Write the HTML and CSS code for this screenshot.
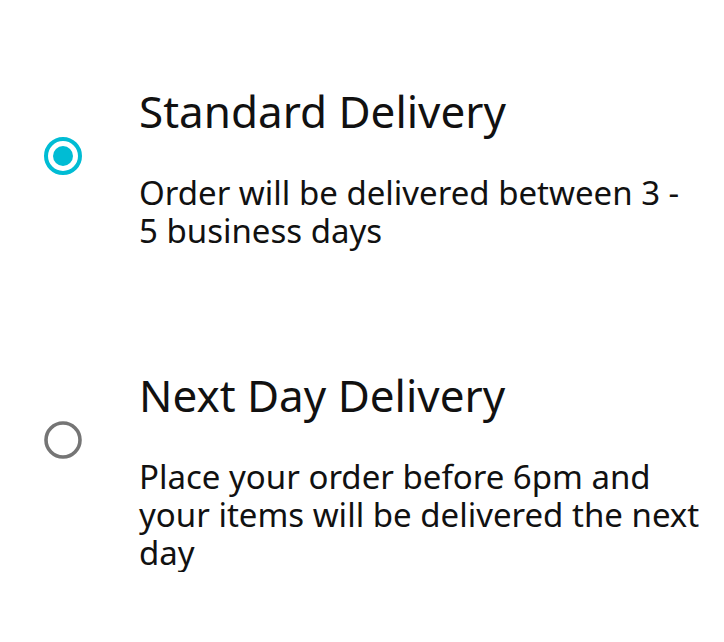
FILE: index.html
```html
<!DOCTYPE html>
<html lang="en">
<head>
<meta charset="utf-8">
<title>Delivery options</title>
<link rel="stylesheet" href="styles.css">
</head>
<body>
<div class="options">
  <label class="option">
    <span class="radio">
      <svg width="40" height="40" viewBox="0 0 40 40"><circle cx="20" cy="20" r="17" fill="none" stroke="#00bcd4" stroke-width="4"/><circle cx="20" cy="20" r="10" fill="#00bcd4"/></svg>
    </span>
    <span class="text">
      <span class="title">Standard Delivery</span>
      <span class="desc">Order will be delivered between 3 - 5 business days</span>
    </span>
  </label>
  <label class="option">
    <span class="radio">
      <svg width="40" height="40" viewBox="0 0 40 40"><circle cx="20" cy="20" r="17" fill="none" stroke="#757575" stroke-width="3.6"/></svg>
    </span>
    <span class="text">
      <span class="title">Next Day Delivery</span>
      <span class="desc">Place your order before 6pm and your items will be delivered the next day</span>
    </span>
  </label>
</div>
</body>
</html>
```
FILE: styles.css
```css
html, body {
  margin: 0;
  background: #ffffff;
}
body {
  font-family: "Noto Sans", "Open Sans", sans-serif;
  color: #111111;
}
.options {
  display: flex;
  flex-direction: column;
  gap: 117px;
  padding-top: 83px;
}
.option {
  display: flex;
  align-items: flex-start;
  padding-left: 43px;
  gap: 56px;
}
.radio {
  display: block;
  width: 40px;
  height: 40px;
  margin-top: 53px;
  flex: none;
}
.radio svg {
  display: block;
}
.text {
  display: flex;
  flex-direction: column;
  gap: 35px;
  width: 563px;
}
.title {
  font-size: 44px;
  line-height: 56px;
}
.desc {
  font-size: 33px;
  line-height: 38px;
}
```
